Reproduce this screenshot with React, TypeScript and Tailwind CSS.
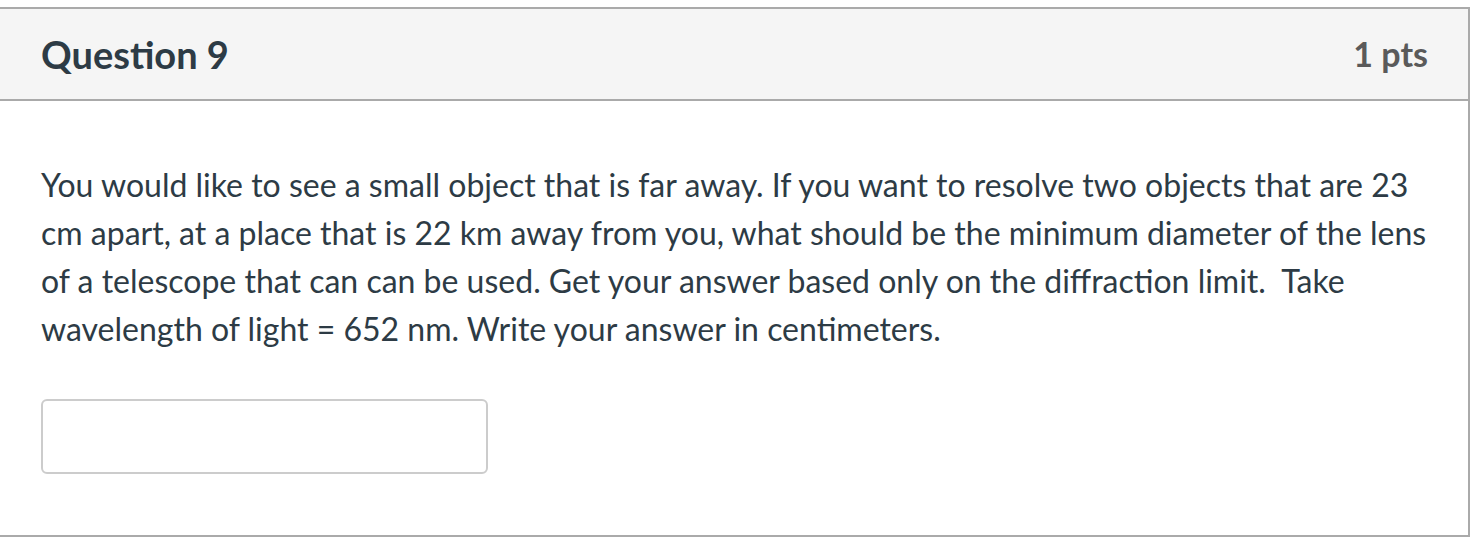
export default function App() {
  return (
    <div className="w-[1471px] h-[540px] bg-white pt-[7px] font-['Lato','Liberation_Sans',sans-serif]">
      <div className="w-[1470px] border-2 border-l-0 border-[#aaaaaa] h-[530px] flex flex-col">
        <div className="h-[92px] bg-[#f5f5f5] border-b-2 border-[#aaaaaa] flex items-center justify-between pl-[41px] pr-[40px]">
          <h2 className="text-[38px] font-bold text-[#2d3b45] leading-none">Question 9</h2>
          <div className="text-[34px] font-bold text-[#5a5a5a] leading-none">1 pts</div>
        </div>
        <div className="pl-[41px] pr-[30px] pt-[60px]">
          <p className="text-[32px] leading-[48px] text-[#2d3b45]">
            You would like to see a small object that is far away. If you want to resolve two objects that are 23 cm apart, at a place that is 22 km away from you, what should be the minimum diameter of the lens of a telescope that can can be used. Get your answer based only on the diffraction limit.&nbsp; Take wavelength of light = 652 nm. Write your answer in centimeters.
          </p>
          <input
            type="text"
            className="mt-[46px] w-[447px] h-[75px] border-2 border-[#cccccc] rounded-[6px] bg-white outline-none"
          />
        </div>
      </div>
    </div>
  );
}
